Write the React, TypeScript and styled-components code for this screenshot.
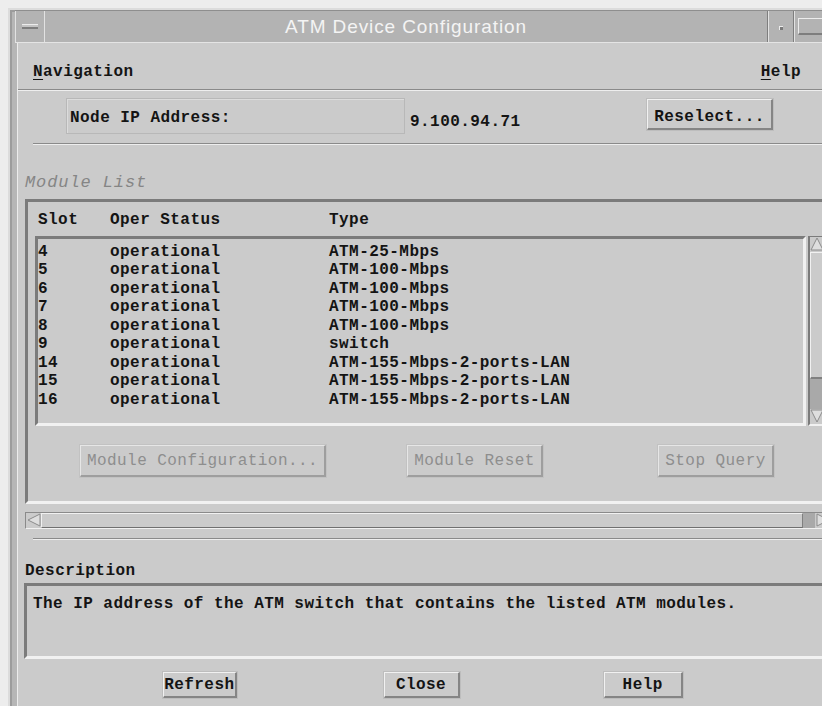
import React from 'react';
import styled, { createGlobalStyle } from 'styled-components';

const MONO = `"Liberation Mono", "DejaVu Sans Mono", monospace`;
const FACE = '#cbcbcb';
const SHADE = '#7b7b7b';
const LIGHT = '#f1f1f1';

const GlobalStyle = createGlobalStyle`
  html, body {
    margin: 0;
    padding: 0;
    background: #ededed;
  }
  #root {
    width: 822px;
    height: 706px;
    overflow: hidden;
  }
`;

const Screen = styled.div`
  width: 822px;
  height: 706px;
  overflow: hidden;
  padding: 8px 0 0 8px;
  box-sizing: border-box;
`;

const Window = styled.div`
  width: 830px;
  height: 698px;
  box-sizing: border-box;
  display: flex;
  flex-direction: column;
  background: #b6b6b6;
  border-top: 2px solid #dcdcdc;
  border-left: 2px solid #dcdcdc;
  padding-left: 5px;
  box-shadow: inset 2px 2px 0 #9c9c9c;
`;

/* ---- title bar ---- */
const TitleBar = styled.div`
  flex: none;
  height: 33px;
  box-sizing: border-box;
  display: flex;
  background: #b3b3b3;
  border-top: 1px solid #8e8e8e;
  border-bottom: 1px solid #e4e4e4;
`;

const MenuBox = styled.div`
  width: 28px;
  display: flex;
  align-items: center;
  justify-content: center;
  border-right: 1px solid #e2e2e2;
  border-left: 1px solid #e2e2e2;
`;

const MenuGlyph = styled.div`
  width: 16px;
  height: 2px;
  background: #c4c4c4;
  border-top: 1px solid #ececec;
  border-bottom: 2px solid #7e7e7e;
`;

const Title = styled.div`
  flex: 1;
  display: flex;
  align-items: center;
  justify-content: center;
  font-family: "Liberation Sans", Arial, sans-serif;
  font-size: 19px;
  letter-spacing: 0.9px;
  color: #f4f4f4;
`;

const MinBox = styled.div`
  width: 25px;
  display: flex;
  align-items: center;
  justify-content: center;
  border-left: 1px solid #7e7e7e;
  border-right: 1px solid #7e7e7e;
  box-shadow: inset 1px 0 0 #e2e2e2;
`;

const MinDot = styled.div`
  width: 3px;
  height: 3px;
  margin-top: 2px;
  background: #7a7a7a;
  border-top: 1px solid #ececec;
  border-left: 1px solid #ececec;
`;

const MaxBox = styled.div`
  width: 40px;
  display: flex;
  align-items: center;
  padding-left: 3px;
  border-left: 1px solid #e2e2e2;
`;

const MaxGlyph = styled.div`
  width: 30px;
  height: 17px;
  border-top: 1px solid #ececec;
  border-left: 1px solid #ececec;
  border-bottom: 2px solid #7e7e7e;
  box-sizing: border-box;
`;

/* ---- client area ---- */
const Panel = styled.div`
  flex: 1;
  margin-left: 2px;
  border-left: 1px solid #ececec;
  background: ${FACE};
  display: flex;
  flex-direction: column;
  font-family: ${MONO};
  font-weight: bold;
  font-size: 16px;
  letter-spacing: 0.45px;
  color: #141414;
`;

const MenuBar = styled.div`
  flex: none;
  height: 46px;
  box-sizing: border-box;
  display: flex;
  align-items: center;
  justify-content: space-between;
  padding: 11px 37px 0 15px;
`;

const Mnemonic = styled.span`
  text-decoration: underline;
  text-underline-offset: 3px;
`;

const Rule = styled.div<{ $inset: number }>`
  flex: none;
  height: 0;
  margin-left: ${(p) => p.$inset}px;
  border-top: 1px solid #8a8a8a;
  border-bottom: 1px solid #eeeeee;
`;

const AddressRow = styled.div`
  display: flex;
  align-items: flex-start;
  margin: 7px 0 0 48px;
`;

const AddressLabel = styled.div`
  width: 339px;
  height: 36px;
  box-sizing: border-box;
  display: flex;
  align-items: center;
  padding: 4px 0 0 3px;
  border: 1px solid #b8b8b8;
  box-shadow: inset 1px 1px 0 #dcdcdc;
`;

const AddressValue = styled.div`
  width: 237px;
  height: 36px;
  margin-left: 5px;
  display: flex;
  align-items: center;
  padding-top: 11px;
  box-sizing: border-box;
`;

const PushButton = styled.div<{ $width: number; $height: number; $offset?: number; $off?: boolean }>`
  flex: none;
  width: ${(p) => p.$width}px;
  height: ${(p) => p.$height}px;
  margin-left: ${(p) => p.$offset ?? 0}px;
  box-sizing: border-box;
  display: flex;
  align-items: center;
  justify-content: center;
  padding-top: 1px;
  background: ${FACE};
  border-style: solid;
  border-width: 1px 2px 2px 1px;
  border-color: ${(p) =>
    p.$off ? '#e6e6e6 #9e9e9e #9e9e9e #e6e6e6' : `${LIGHT} #858585 #858585 ${LIGHT}`};
  box-shadow: 0 0 0 1px ${(p) => (p.$off ? '#c2c2c2' : '#bdbdbd')};
  color: ${(p) => (p.$off ? '#8e8e8e' : '#141414')};
  font-weight: ${(p) => (p.$off ? 'normal' : 'bold')};
  white-space: nowrap;
`;

const ReselectButton = styled(PushButton)`
  margin-top: 1px;
  padding-top: 5px;
`;

const GroupTitle = styled.div`
  margin: 28px 0 0 7px;
  line-height: 20px;
  font-style: italic;
  font-weight: normal;
  font-size: 17px;
  letter-spacing: 0.9px;
  color: #858585;
`;

const GroupFrame = styled.div`
  flex: none;
  width: 802px;
  margin: 6px 0 0 7px;
  box-sizing: border-box;
  border: 3px solid;
  border-color: ${SHADE} ${LIGHT} ${LIGHT} ${SHADE};
  padding: 9px 0 24px 0;
`;

const Columns = styled.div<{ $inset: number }>`
  display: grid;
  grid-template-columns: 72px 219px 1fr;
  line-height: 18.5px;
  margin-left: ${(p) => p.$inset}px;
`;

const ListArea = styled.div`
  display: flex;
  gap: 2px;
  margin: 6px 0 0 7px;
`;

const ListBox = styled.div`
  width: 773px;
  height: 190px;
  box-sizing: border-box;
  padding-top: 4px;
  border: 3px solid;
  border-color: ${SHADE} ${LIGHT} ${LIGHT} ${SHADE};
`;

const VScroll = styled.div`
  width: 16px;
  height: 190px;
  box-sizing: border-box;
  display: flex;
  flex-direction: column;
  background: #a9a9a9;
  border-left: 2px solid ${SHADE};
  border-top: 1px solid ${SHADE};
  border-bottom: 2px solid ${LIGHT};
`;

const VThumb = styled.div`
  flex: 1;
  margin-bottom: 30px;
  background: ${FACE};
  border-top: 1px solid ${LIGHT};
  border-left: 1px solid ${LIGHT};
  border-bottom: 2px solid #808080;
`;

const ArrowCell = styled.div<{ $w: number; $h: number }>`
  flex: none;
  width: ${(p) => p.$w}px;
  height: ${(p) => p.$h}px;
  display: flex;
  align-items: center;
  justify-content: center;
  background: ${FACE};
`;

const ButtonRow = styled.div`
  display: flex;
  margin-top: 19px;
`;

const HScroll = styled.div`
  flex: none;
  width: 805px;
  height: 17px;
  margin: 8px 0 0 7px;
  box-sizing: border-box;
  display: flex;
  background: #a9a9a9;
  border-top: 1px solid #8a8a8a;
  border-left: 1px solid #8a8a8a;
  border-bottom: 1px solid ${LIGHT};
`;

const HThumb = styled.div`
  flex: 1;
  margin-right: 12px;
  background: ${FACE};
  border-top: 1px solid ${LIGHT};
  border-left: 1px solid ${LIGHT};
  border-right: 1px solid #808080;
  border-bottom: 1px solid #707070;
`;

const FieldLabel = styled.div`
  margin: 22px 0 0 7px;
  line-height: 18.5px;
`;

const DescriptionBox = styled.div`
  flex: none;
  height: 76px;
  margin: 3px 0 0 6px;
  box-sizing: border-box;
  padding: 9px 0 0 6px;
  line-height: 18.5px;
  border: 3px solid;
  border-color: ${SHADE} ${LIGHT} ${LIGHT} ${SHADE};
  border-right: none;
`;

const ActionRow = styled.div`
  display: grid;
  grid-template-columns: repeat(3, 221.7px);
  justify-items: center;
  margin: 13px 0 0 71px;
`;

const modules = [
  { slot: '4', type: 'ATM-25-Mbps' },
  { slot: '5', type: 'ATM-100-Mbps' },
  { slot: '6', type: 'ATM-100-Mbps' },
  { slot: '7', type: 'ATM-100-Mbps' },
  { slot: '8', type: 'ATM-100-Mbps' },
  { slot: '9', type: 'switch' },
  { slot: '14', type: 'ATM-155-Mbps-2-ports-LAN' },
  { slot: '15', type: 'ATM-155-Mbps-2-ports-LAN' },
  { slot: '16', type: 'ATM-155-Mbps-2-ports-LAN' },
];

function Arrow({ dir }: { dir: 'left' | 'right' | 'up' | 'down' }) {
  const pts = {
    left: '1,7 13,1 13,13',
    right: '13,7 1,1 1,13',
    up: '7,1 1,13 13,13',
    down: '7,13 1,1 13,1',
  }[dir];
  return (
    <svg width="14" height="14" viewBox="0 0 14 14">
      <polygon points={pts} fill="#dedede" stroke="#8c8c8c" strokeWidth="1" />
    </svg>
  );
}

export default function App() {
  return (
    <Screen>
      <GlobalStyle />
      <Window>
        <TitleBar>
          <MenuBox>
            <MenuGlyph />
          </MenuBox>
          <Title>ATM Device Configuration</Title>
          <MinBox>
            <MinDot />
          </MinBox>
          <MaxBox>
            <MaxGlyph />
          </MaxBox>
        </TitleBar>

        <Panel>
          <MenuBar>
            <span>
              <Mnemonic>N</Mnemonic>avigation
            </span>
            <span>
              <Mnemonic>H</Mnemonic>elp
            </span>
          </MenuBar>
          <Rule $inset={0} />

          <AddressRow>
            <AddressLabel>Node IP Address:</AddressLabel>
            <AddressValue>9.100.94.71</AddressValue>
            <ReselectButton $width={126} $height={31}>
              Reselect...
            </ReselectButton>
          </AddressRow>
          <Rule $inset={15} style={{ marginTop: 9 }} />

          <GroupTitle>Module List</GroupTitle>
          <GroupFrame>
            <Columns $inset={10}>
              <span>Slot</span>
              <span>Oper Status</span>
              <span>Type</span>
            </Columns>
            <ListArea>
              <ListBox>
                {modules.map((m) => (
                  <Columns $inset={0} key={m.slot}>
                    <span>{m.slot}</span>
                    <span>operational</span>
                    <span>{m.type}</span>
                  </Columns>
                ))}
              </ListBox>
              <VScroll>
                <ArrowCell $w={14} $h={15}>
                  <Arrow dir="up" />
                </ArrowCell>
                <VThumb />
                <ArrowCell $w={14} $h={15}>
                  <Arrow dir="down" />
                </ArrowCell>
              </VScroll>
            </ListArea>
            <ButtonRow>
              <PushButton $off $width={246} $height={32} $offset={52}>
                Module Configuration...
              </PushButton>
              <PushButton $off $width={136} $height={32} $offset={81}>
                Module Reset
              </PushButton>
              <PushButton $off $width={116} $height={32} $offset={115}>
                Stop Query
              </PushButton>
            </ButtonRow>
          </GroupFrame>

          <HScroll>
            <ArrowCell $w={15} $h={15}>
              <Arrow dir="left" />
            </ArrowCell>
            <HThumb />
            <ArrowCell $w={15} $h={15}>
              <Arrow dir="right" />
            </ArrowCell>
          </HScroll>
          <Rule $inset={15} style={{ marginTop: 9 }} />

          <FieldLabel>Description</FieldLabel>
          <DescriptionBox>
            The IP address of the ATM switch that contains the listed ATM modules.
          </DescriptionBox>

          <ActionRow>
            <PushButton $width={74} $height={26}>Refresh</PushButton>
            <PushButton $width={76} $height={26}>Close</PushButton>
            <PushButton $width={79} $height={26}>Help</PushButton>
          </ActionRow>
        </Panel>
      </Window>
    </Screen>
  );
}
